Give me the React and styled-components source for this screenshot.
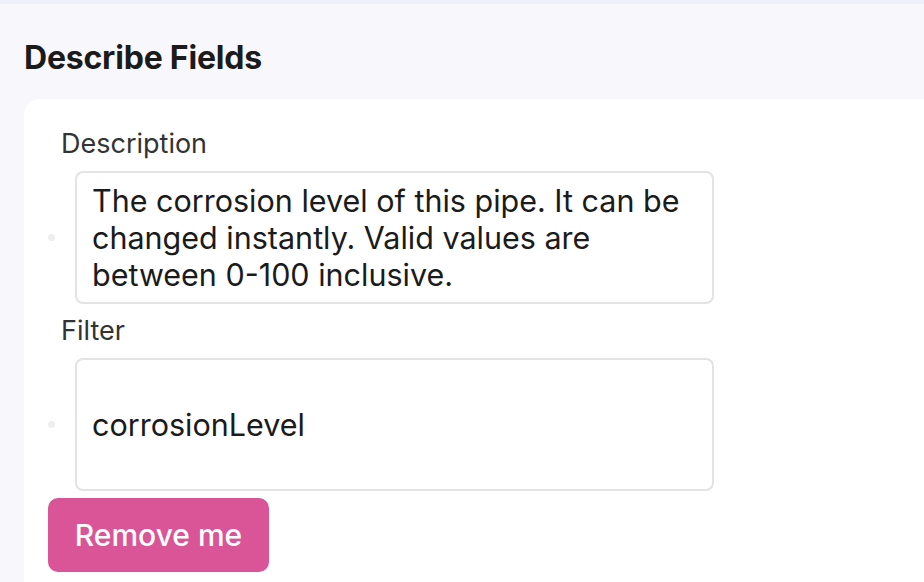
import React from "react";
import styled, { createGlobalStyle } from "styled-components";

const Global = createGlobalStyle`
  html, body { margin: 0; padding: 0; }
  body {
    background: #f8f8fc;
    font-family: Inter, "Liberation Sans", sans-serif;
    overflow: hidden;
  }
  * { box-sizing: border-box; }
`;

const Page = styled.div`
  border-top: 4px solid #efeff9;
  padding: 0 0 0 24px;
  height: 582px;
  overflow: hidden;
`;

const Title = styled.h2`
  margin: 0;
  padding: 34px 0 0;
  height: 95px;
  font-size: 32px;
  line-height: 40px;
  font-weight: 700;
  color: #1b1b1b;
  letter-spacing: -0.2px;
`;

const Card = styled.div`
  background: #fff;
  border-radius: 16px 0 0 0;
  padding: 25px 0 0 24px;
  height: 600px;
  display: flex;
  flex-direction: column;
  align-items: flex-start;
`;

const Label = styled.div`
  margin-left: 13px;
  font-size: 27px;
  color: #333;
  line-height: 40px;
  margin-bottom: 7px;
`;

const Row = styled.div`
  display: flex;
  align-items: center;
  margin-bottom: 7px;
`;

const Dot = styled.span`
  width: 7px;
  height: 7px;
  border-radius: 50%;
  background: #eeeeee;
  margin: 0 20px 0 0;
`;

const Field = styled.div`
  width: 639px;
  height: 133px;
  border: 2px solid #e3e3e3;
  border-radius: 8px;
  padding: 9px 15px;
  font-size: 30.5px;
  line-height: 37px;
  color: #1b1b1b;
  display: flex;
  align-items: ${(p) => (p.$center ? "center" : "flex-start")};
`;

const Button = styled.button`
  width: 221px;
  height: 74px;
  border: none;
  border-radius: 10px;
  background: #d95597;
  color: #fff;
  font-family: inherit;
  font-size: 30px;
  font-weight: 500;
  padding: 0;
`;

export default function App() {
  return (
    <>
      <Global />
      <Page>
        <Title>Describe Fields</Title>
        <Card>
          <Label>Description</Label>
          <Row>
            <Dot />
            <Field>
              The corrosion level of this pipe. It can be changed instantly. Valid values are between 0-100 inclusive.
            </Field>
          </Row>
          <Label>Filter</Label>
          <Row>
            <Dot />
            <Field $center>corrosionLevel</Field>
          </Row>
          <Button>Remove me</Button>
        </Card>
      </Page>
    </>
  );
}
